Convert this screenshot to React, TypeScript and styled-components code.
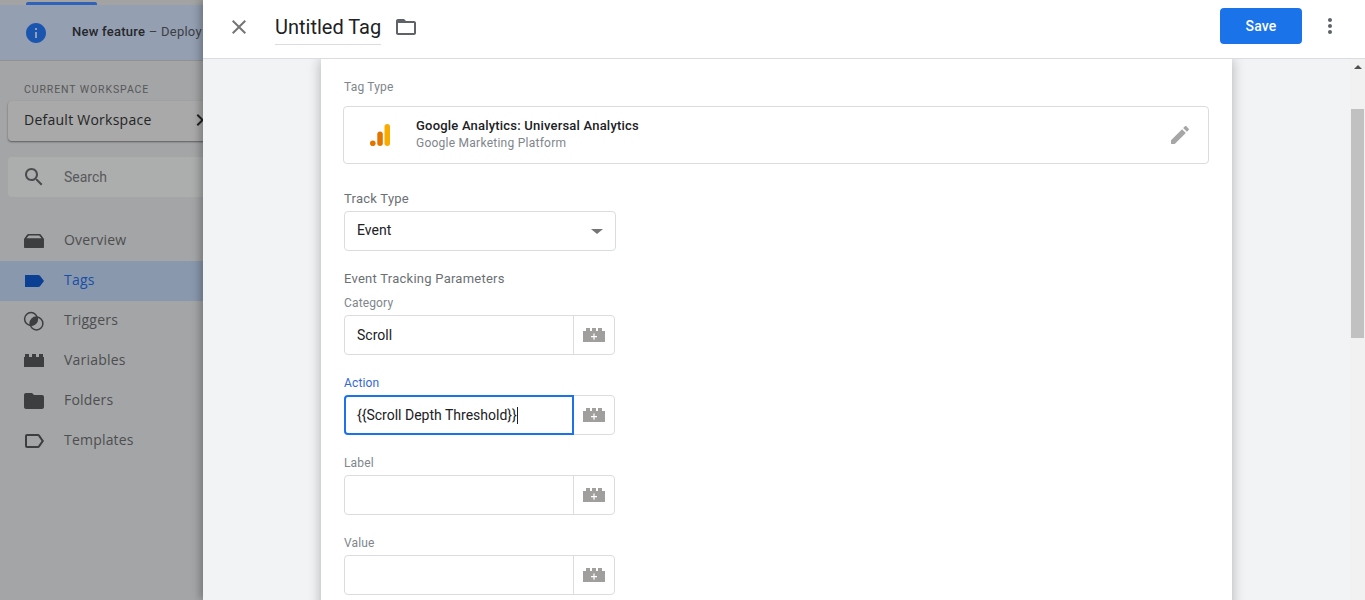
import { ReactNode } from 'react'
import styled, { createGlobalStyle } from 'styled-components'

const Global = createGlobalStyle`
	html, body { margin: 0; padding: 0; height: 100%; overflow: hidden; }
	#root { height: 100%; }
	* { box-sizing: border-box; }
	body { font-family: Roboto, "Liberation Sans", sans-serif; }
`

const PATHS = {
	close: 'M19 6.41L17.59 5 12 10.59 6.41 5 5 6.41 10.59 12 5 17.59 6.41 19 12 13.41 17.59 19 19 17.59 13.41 12z',
	folder: 'M20 6h-8l-2-2H4c-1.1 0-1.99.9-1.99 2L2 18c0 1.1.9 2 2 2h16c1.1 0 2-.9 2-2V8c0-1.1-.9-2-2-2zm0 12H4V8h16v10z',
	search: 'M15.5 14h-.79l-.28-.27C15.41 12.59 16 11.11 16 9.5 16 5.91 13.09 3 9.5 3S3 5.91 3 9.5 5.91 16 9.5 16c1.61 0 3.09-.59 4.23-1.57l.27.28v.79l5 4.99L20.49 19l-4.99-5zm-6 0C7.01 14 5 11.99 5 9.5S7.01 5 9.5 5 14 7.01 14 9.5 11.99 14 9.5 14z',
	edit: 'M3 17.25V21h3.75L17.81 9.94l-3.75-3.75L3 17.25zM20.71 7.04c.39-.39.39-1.02 0-1.41l-2.34-2.34c-.39-.39-1.02-.39-1.41 0l-1.83 1.83 3.75 3.75 1.83-1.83z',
	info: 'M12 2C6.48 2 2 6.48 2 12s4.48 10 10 10 10-4.48 10-10S17.52 2 12 2zm1 15h-2v-6h2v6zm0-8h-2V7h2v2z',
	chevron: 'M10 6L8.59 7.41 13.17 12l-4.58 4.59L10 18l6-6z',
	more: 'M12 8c1.1 0 2-.9 2-2s-.9-2-2-2-2 .9-2 2 .9 2 2 2zm0 2c-1.1 0-2 .9-2 2s.9 2 2 2 2-.9 2-2-.9-2-2-2zm0 6c-1.1 0-2 .9-2 2s.9 2 2 2 2-.9 2-2-.9-2-2-2z',
	overview: 'M2 10L5.2 5.6C5.500 5.200 6 5 6.500 5H17.500C18 5 18.500 5.200 18.800 5.600L22 10V18C22 18.600 21.600 19 21 19H3C2.400 19 2 18.600 2 18V10zM4.500 9.200H19.500L17.200 6.400H6.800L4.500 9.200z',
	tag: 'M3 6h13.400c.6 0 1.200.3 1.600.8L22 12l-4 5.200c-.4.5-1 .8-1.600.8H3V6z',
	template: 'M17.63 5.84C17.27 5.33 16.67 5 16 5L5 5.01C3.9 5.01 3 5.9 3 7v10c0 1.1.9 1.99 2 1.99L16 19c.67 0 1.27-.33 1.63-.84L22 12l-4.37-6.16zM16 17H5V7h11l3.55 5L16 17z',
	variable: 'M2 8h1V5h4v3h3V5h4v3h3V5h4v3h1v10H2V8z',
	folderFilled: 'M10 4H4c-1.100 0-2 .9-2 2v12c0 1.100.9 2 2 2h16c1.100 0 2-.9 2-2V8c0-1.100-.9-2-2-2h-8l-2-2z'
}

type IconName = keyof typeof PATHS

const Icon = ({ name, size = 24, className }: { name: IconName; size?: number; className?: string }) => (
	<svg className={className} width={size} height={size} viewBox="0 0 24 24" fill="currentColor" aria-hidden="true">
		<path d={PATHS[name]} />
	</svg>
)

const TriggerIcon = () => (
	<svg width="24" height="24" viewBox="0 0 24 24" fill="none" aria-hidden="true">
		<defs>
			<clipPath id="trigger-lens">
				<circle cx="14.5" cy="14.5" r="6.5" />
			</clipPath>
		</defs>
		<circle cx="9" cy="10" r="6.4" stroke="currentColor" strokeWidth="1.5" />
		<circle cx="14.5" cy="14.5" r="6.4" stroke="currentColor" strokeWidth="1.5" />
		<circle cx="9" cy="10" r="6.5" fill="currentColor" clipPath="url(#trigger-lens)" />
	</svg>
)

const AnalyticsLogo = () => (
	<svg width="24" height="24" viewBox="0 0 24 24" aria-hidden="true">
		<rect x="16.5" y="1" width="5.5" height="22" rx="2.75" fill="#f9ab00" />
		<rect x="9.3" y="8.6" width="5.5" height="14.4" rx="2.75" fill="#e37400" />
		<circle cx="4.8" cy="20.2" r="2.8" fill="#e37400" />
	</svg>
)

const Page = styled.div`
	display: flex;
	width: 1365px;
	height: 600px;
	overflow: hidden;
	background: #f1f3f4;
`

const Sidebar = styled.aside`
	flex: 0 0 203px;
	overflow: hidden;
	background: #a4a5a6;
	color: #3f4042;
`

const SideInner = styled.div`
	width: 280px;
`

const TopStrip = styled.div`
	height: 5px;
	padding-left: 26px;
	background: #a3a3a3;
	box-shadow: 0 1px 3px rgba(0, 0, 0, 0.3);
`

const TopTab = styled.div`
	width: 71px;
	height: 3px;
	background: #2f62b8;
	border-radius: 2px 2px 0 0;
	transform: translateY(2px);
`

const Notice = styled.div`
	display: flex;
	align-items: center;
	height: 56px;
	padding-left: 24px;
	background: #949fb2;
	border-bottom: 1px solid #8f9193;
	font-size: 13px;
	letter-spacing: 0.25px;
	white-space: nowrap;
	color: #26272a;
`

const NoticeIcon = styled(Icon)`
	color: #1a56b0;
	margin-right: 24px;
`

const NoticeText = styled.span`
	font-weight: 500;
	margin-top: -3px;
`

const NoticeMore = styled.span`
	font-weight: 400;
	color: #3c4045;
`

const SectionLabel = styled.div`
	padding: 21px 0 0 24px;
	height: 40px;
	font-size: 10.5px;
	line-height: 15px;
	letter-spacing: 0.9px;
	color: #56585a;
`

const Workspace = styled.div`
	display: flex;
	align-items: center;
	width: 272px;
	height: 40px;
	margin-left: 8px;
	padding: 0 0 4px 16px;
	border-radius: 4px;
	background: #a9a9a9;
	box-shadow: 0 1px 2px rgba(0, 0, 0, 0.45);
	font-family: 'Open Sans', sans-serif;
	font-size: 14px;
	font-weight: 500;
	letter-spacing: 0.25px;
	color: #242527;
`

const WorkspaceChevron = styled(Icon)`
	margin: 2px 0 0 36px;
	color: #202124;
`

const SearchBox = styled.div`
	display: flex;
	align-items: center;
	width: 272px;
	height: 40px;
	margin: 16px 0 24px 8px;
	padding-left: 14px;
	border-radius: 4px;
	background: #acadad;
	font-size: 14px;
	color: #57595b;
`

const SearchIcon = styled(Icon)`
	margin-right: 18px;
	color: #4a4c4e;
`

const NavRow = styled.div<{ $active?: boolean }>`
	display: flex;
	align-items: center;
	height: 40px;
	padding-left: 22px;
	gap: 18px;
	font-family: 'Open Sans', sans-serif;
	font-size: 14px;
	font-weight: 500;
	letter-spacing: 0.2px;
	background: ${p => (p.$active ? '#8a98ad' : 'transparent')};
	color: ${p => (p.$active ? '#174ea6' : '#4c4e50')};
`

const NavIcon = styled.span<{ $active?: boolean }>`
	display: flex;
	color: ${p => (p.$active ? '#0b3f94' : '#3c3e40')};
`

const NavLabel = styled.span`
	margin-bottom: 4px;
`

const Drawer = styled.main`
	position: relative;
	z-index: 1;
	flex: 1;
	display: flex;
	flex-direction: column;
	min-width: 0;
	box-shadow: -3px 0 8px rgba(0, 0, 0, 0.28);
`

const Header = styled.header`
	display: flex;
	align-items: center;
	flex: 0 0 59px;
	padding: 0 23px 4px 24px;
	background: #fff;
	border-bottom: 1px solid #dadce0;
`

const CloseIcon = styled(Icon)`
	color: #757575;
	margin-right: 24px;
`

const Title = styled.h1`
	align-self: flex-start;
	margin: 11px 13px 0 0;
	height: 34px;
	line-height: 32px;
	border-bottom: 1px solid #dadce0;
	font-size: 20px;
	font-weight: 400;
	color: #202124;
`

const FolderIcon = styled(Icon)`
	color: #5f6368;
`

const Spacer = styled.div`
	flex: 1;
`

const SaveButton = styled.button`
	width: 82px;
	height: 36px;
	margin-bottom: 2px;
	border: 0;
	border-radius: 4px;
	background: #1a73e8;
	color: #fff;
	font: 500 14px Roboto, sans-serif;
	letter-spacing: 0.2px;
`

const MoreIcon = styled(Icon)`
	margin: 0 0 2px 16px;
	color: #5f6368;
`

const Body = styled.div`
	flex: 1;
	display: flex;
	min-height: 0;
`

const Scroller = styled.div`
	flex: 1;
	display: flex;
	justify-content: center;
	overflow: hidden;
`

const Card = styled.section`
	width: 911px;
	height: 600px;
	padding: 20px 23px 0;
	background: #fff;
	box-shadow: 0 0 12px rgba(0, 0, 0, 0.28);
`

const TagTypeLabel = styled.div`
	height: 16px;
	margin-bottom: 11px;
	font-size: 12px;
	line-height: 16px;
	letter-spacing: 0.2px;
	color: #80868b;
`

const TagTypeBox = styled.div`
	display: flex;
	align-items: center;
	width: 866px;
	height: 58px;
	margin: 0 0 26px -1px;
	padding: 0 16px 0 24px;
	border: 1px solid #dadce0;
	border-radius: 4px;
`

const TagTypeText = styled.div`
	flex: 1;
	margin-left: 24px;
`

const TagTypeName = styled.div`
	margin-bottom: 2px;
	font-size: 13px;
	font-weight: 500;
	line-height: 15px;
	letter-spacing: 0.2px;
	color: #202124;
`

const TagTypeVendor = styled.div`
	font-size: 12px;
	line-height: 17px;
	letter-spacing: 0.25px;
	color: #80868b;
`

const PencilIcon = styled(Icon)`
	color: #a6a6a6;
`

const FieldTitle = styled.div<{ $gap: number }>`
	height: 16px;
	margin-bottom: ${p => p.$gap}px;
	font-size: 13px;
	line-height: 18px;
	letter-spacing: 0.25px;
	color: #6b7075;
`

const Select = styled.div`
	display: flex;
	align-items: center;
	justify-content: space-between;
	width: 272px;
	height: 40px;
	margin-bottom: 19px;
	padding: 0 12px 2px 12px;
	border: 1px solid #dadce0;
	border-radius: 4px;
	font-size: 14px;
	color: #202124;
`

const Caret = styled.span`
	width: 0;
	height: 0;
	margin-top: 2px;
	border-left: 6px solid transparent;
	border-right: 6px solid transparent;
	border-top: 5px solid #757575;
`

const Field = styled.div`
	margin-bottom: 19px;
`

const FieldLabel = styled.label<{ $focused?: boolean }>`
	display: block;
	height: 16px;
	margin-bottom: 5px;
	font-size: 12px;
	line-height: 18px;
	letter-spacing: 0.15px;
	color: ${p => (p.$focused ? '#3367d6' : '#80868b')};
`

const InputGroup = styled.div`
	display: flex;
	width: 271px;
	height: 40px;
	border: 1px solid #dadce0;
	border-radius: 4px;
`

const InputBox = styled.div<{ $focused?: boolean }>`
	display: flex;
	align-items: center;
	flex: 1;
	min-width: 0;
	padding-left: 12px;
	font-size: 14px;
	color: #202124;
	${p => p.$focused && 'margin: -1px -1px -1px -1px; padding-left: 11px; border: 2px solid #1a73e8; border-radius: 4px 0 0 4px;'}
`

const Cursor = styled.span`
	width: 1px;
	height: 17px;
	background: #202124;
`

const VarButton = styled.div<{ $focused?: boolean }>`
	display: flex;
	align-items: center;
	justify-content: center;
	flex: 0 0 41px;
	border-left: ${p => (p.$focused ? '0' : '1px solid #dadce0')};
	color: #a19f9d;
`

const Scrollbar = styled.div`
	flex: 0 0 15px;
	display: flex;
	flex-direction: column;
	align-items: center;
	background: #f1f1f1;
`

const ScrollArrow = styled.span`
	width: 0;
	height: 0;
	margin-top: 6px;
	border-left: 4px solid transparent;
	border-right: 4px solid transparent;
	border-bottom: 4px solid #505050;
`

const ScrollThumb = styled.div`
	width: 13px;
	height: 229px;
	margin-top: 40px;
	background: #c1c1c1;
`

const navItems: { label: string; icon: ReactNode; active?: boolean }[] = [
	{ label: 'Overview', icon: <Icon name="overview" /> },
	{ label: 'Tags', icon: <Icon name="tag" />, active: true },
	{ label: 'Triggers', icon: <TriggerIcon /> },
	{ label: 'Variables', icon: <Icon name="variable" /> },
	{ label: 'Folders', icon: <Icon name="folderFilled" /> },
	{ label: 'Templates', icon: <Icon name="template" /> }
]

const VariablePicker = ({ focused }: { focused?: boolean }) => (
	<VarButton $focused={focused}>
		<svg width="22" height="14" viewBox="0 0 22 14" aria-hidden="true">
			<path fill="currentColor" d="M0 3h3V0h4v3h2V0h4v3h2V0h4v3h3v11H0z" />
			<path fill="#fff" d="M10.400 5.500h1.200v2.500H14v1.200h-2.400v2.500h-1.200V9.200H8V8h2.400z" />
		</svg>
	</VarButton>
)

const TextField = ({ label, value, focused }: { label: string; value?: string; focused?: boolean }) => (
	<Field>
		<FieldLabel $focused={focused}>{label}</FieldLabel>
		<InputGroup>
			<InputBox $focused={focused}>
				{value}
				{focused && <Cursor />}
			</InputBox>
			<VariablePicker focused={focused} />
		</InputGroup>
	</Field>
)

export default function App() {
	return (
		<Page>
			<Global />
			<Sidebar>
				<SideInner>
					<TopStrip>
						<TopTab />
					</TopStrip>
					<Notice>
						<NoticeIcon name="info" />
						<NoticeText>
							New feature <NoticeMore>– Deploy</NoticeMore>
						</NoticeText>
					</Notice>
					<SectionLabel>CURRENT WORKSPACE</SectionLabel>
					<Workspace>
						Default Workspace
						<WorkspaceChevron name="chevron" />
					</Workspace>
					<SearchBox>
						<SearchIcon name="search" />
						Search
					</SearchBox>
					{navItems.map(item => (
						<NavRow key={item.label} $active={item.active}>
							<NavIcon $active={item.active}>{item.icon}</NavIcon>
							<NavLabel>{item.label}</NavLabel>
						</NavRow>
					))}
				</SideInner>
			</Sidebar>
			<Drawer>
				<Header>
					<CloseIcon name="close" />
					<Title>Untitled Tag</Title>
					<FolderIcon name="folder" />
					<Spacer />
					<SaveButton>Save</SaveButton>
					<MoreIcon name="more" />
				</Header>
				<Body>
					<Scroller>
						<Card>
							<TagTypeLabel>Tag Type</TagTypeLabel>
							<TagTypeBox>
								<AnalyticsLogo />
								<TagTypeText>
									<TagTypeName>Google Analytics: Universal Analytics</TagTypeName>
									<TagTypeVendor>Google Marketing Platform</TagTypeVendor>
								</TagTypeText>
								<PencilIcon name="edit" />
							</TagTypeBox>
							<FieldTitle $gap={5}>Track Type</FieldTitle>
							<Select>
								Event
								<Caret />
							</Select>
							<FieldTitle $gap={8}>Event Tracking Parameters</FieldTitle>
							<TextField label="Category" value="Scroll" />
							<TextField label="Action" value="{{Scroll Depth Threshold}}" focused />
							<TextField label="Label" />
							<TextField label="Value" />
						</Card>
					</Scroller>
					<Scrollbar>
						<ScrollArrow />
						<ScrollThumb />
					</Scrollbar>
				</Body>
			</Drawer>
		</Page>
	)
}
